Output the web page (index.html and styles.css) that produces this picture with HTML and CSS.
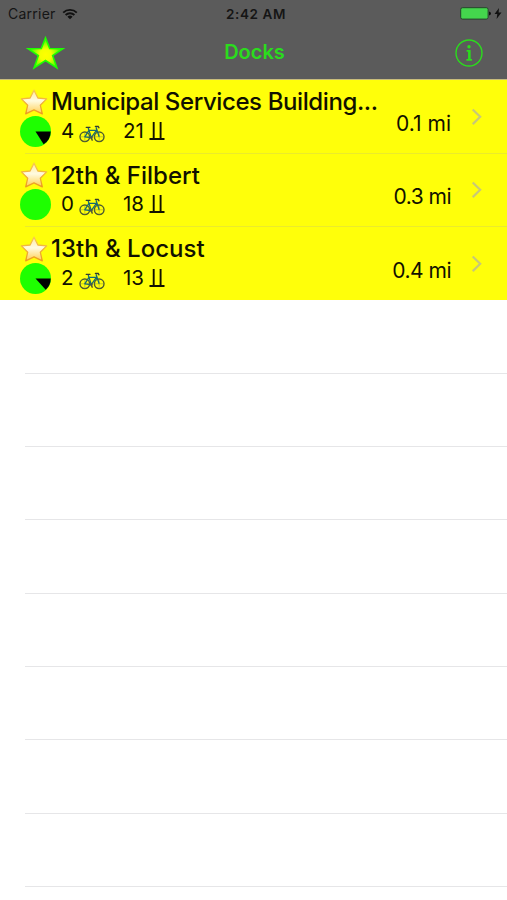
FILE: index.html
```html
<!DOCTYPE html>
<html lang="en">
<head>
    <meta charset="UTF-8">
    <meta name="viewport" content="width=device-width, initial-scale=1.0">
    <title>Docks</title>
    <link rel="stylesheet" href="styles.css">
</head>
<body>
    <!-- Shared icons -->
    <svg class="sprite" aria-hidden="true">
        <defs>
            <linearGradient id="starFill" x1="0" y1="0" x2="0" y2="1">
                <stop offset="0" stop-color="#ffe9a0"/>
                <stop offset="0.45" stop-color="#fffbe0"/>
                <stop offset="1" stop-color="#ffcf52"/>
            </linearGradient>
            <linearGradient id="starEdge" x1="0" y1="0" x2="0" y2="1">
                <stop offset="0" stop-color="#f7c850"/>
                <stop offset="1" stop-color="#ec9a20"/>
            </linearGradient>
            <radialGradient id="navStarFill" gradientUnits="userSpaceOnUse" cx="20" cy="20" r="15">
                <stop offset="0" stop-color="#ffff00"/>
                <stop offset="0.4" stop-color="#f4ff00"/>
                <stop offset="1" stop-color="#50ff00"/>
            </radialGradient>
        </defs>
        <symbol id="star" viewBox="0 0 28 26">
            <path d="M14 1.2L17.9 9L26.6 9.9L20.3 16.2L22.3 24.8L14 20.8L5.7 24.8L7.7 16.2L1.4 9.9L10.1 9Z" fill="url(#starFill)" stroke="url(#starEdge)" stroke-width="1.3" stroke-linejoin="round"/>
        </symbol>
        <symbol id="bike" viewBox="0 0 26 18">
            <g fill="none" stroke="#4c5a30" stroke-width="1.4">
                <circle cx="5.8" cy="11.8" r="4.8"/>
                <circle cx="20.2" cy="11.8" r="4.8"/>
            </g>
            <path d="M5.8 7V16.6M1 11.8H10.6M20.2 7V16.6M15.4 11.8H25" fill="none" stroke="#8e9432" stroke-width=".5"/>
            <path d="M9.2 3L12.3 12.6L17.4 5.4H9.9L5.8 11.8L12.3 12.6M20.2 11.8L17 2.2" fill="none" stroke="#176b70" stroke-width="1.3" stroke-linejoin="round"/>
            <path d="M7.2 2.3H11M16.4 1.4L19.2 1.5L20 2.8M12.3 12.6L13.2 15.2" fill="none" stroke="#343b32" stroke-width="1.3" stroke-linecap="round"/>
            <circle cx="12.3" cy="12.6" r="1.4" fill="#4b5845"/>
        </symbol>
        <symbol id="dock" viewBox="0 0 16 19">
            <path d="M4.7 0V17M11.6 0V17M.5 17H15.5" fill="none" stroke="#111100" stroke-width="1.9"/>
        </symbol>
        <symbol id="chevron" viewBox="0 0 12 18">
            <path d="M1.7 1.5L9.2 8.8L1.7 16.1" fill="none" stroke="#c8c878" stroke-width="2.2"/>
        </symbol>
    </svg>

    <header class="header">
        <div class="status-bar">
            <div class="carrier">
                <span>Carrier</span>
                <svg class="wifi" viewBox="0 0 16 12">
                    <path d="M1.2 4.6A9.8 9.8 0 0 1 14.8 4.6M3.6 7A6.3 6.3 0 0 1 12.4 7" fill="none" stroke="#111" stroke-width="1.9"/>
                    <path d="M8 11.3L5.4 8.8A3.7 3.7 0 0 1 10.6 8.8Z" fill="#111"/>
                </svg>
            </div>
            <span class="time">2:42 AM</span>
            <div class="power">
                <svg class="battery" viewBox="0 0 32 13">
                    <rect x=".7" y=".7" width="27.4" height="11.4" rx="1.8" fill="#44d64d" stroke="#24452a" stroke-width="1"/>
                    <path d="M29 4.4Q31 4.8 31 6.4Q31 8 29 8.4Z" fill="#111"/>
                </svg>
                <svg class="bolt" viewBox="0 0 8 11">
                    <path d="M5 0L.5 6H3.3L2.6 11L7.5 4.6H4.6Z" fill="#111"/>
                </svg>
            </div>
        </div>
        <nav class="nav-bar">
            <svg class="nav-star" viewBox="0 0 40 36">
                <path d="M20 2.5L24.3 13.3L38 13.6L27.3 20.7L31.7 33.2L20 25.7L8.3 33.2L12.7 20.7L2 13.6L15.7 13.3Z" fill="url(#navStarFill)" stroke="#1dff00" stroke-width="1.6"/>
            </svg>
            <h1>Docks</h1>
            <svg class="nav-info" viewBox="0 0 28 28">
                <circle cx="14" cy="14" r="13" fill="none" stroke="#2bdc1d" stroke-width="1.4"/>
                <circle cx="14" cy="7.8" r="1.7" fill="#2bdc1d"/>
                <path d="M11.6 11.9H14.5V20.8M11.4 20.9H17" fill="none" stroke="#2bdc1d" stroke-width="1.6"/>
                <path d="M14.3 11.1V21" stroke="#2bdc1d" stroke-width="2.4"/>
            </svg>
        </nav>
    </header>

    <main class="dock-list">
        <div class="row dock">
            <div class="info">
                <div class="name"><svg class="star"><use href="#star"/></svg><span class="long">Municipal Services Building...</span></div>
                <div class="stats">
                    <svg class="pie" viewBox="-15.5 -15.5 31 31">
                        <circle r="15.5" fill="#1eff00"/>
                        <path d="M0 0H15.2A15.2 15.2 0 0 1 8.1 12.8Z" fill="#000"/>
                    </svg>
                    <span class="bikes">4</span><svg class="bike"><use href="#bike"/></svg>
                    <span class="docks">21</span><svg class="dock-icon"><use href="#dock"/></svg>
                </div>
            </div>
            <span class="distance near">0.1 mi</span>
            <svg class="chevron"><use href="#chevron"/></svg>
        </div>
        <div class="row dock">
            <div class="info">
                <div class="name"><svg class="star"><use href="#star"/></svg><span>12th &amp; Filbert</span></div>
                <div class="stats">
                    <svg class="pie" viewBox="-15.5 -15.5 31 31">
                        <circle r="15.5" fill="#1eff00"/>
                    </svg>
                    <span class="bikes">0</span><svg class="bike"><use href="#bike"/></svg>
                    <span class="docks">18</span><svg class="dock-icon"><use href="#dock"/></svg>
                </div>
            </div>
            <span class="distance">0.3 mi</span>
            <svg class="chevron"><use href="#chevron"/></svg>
        </div>
        <div class="row dock">
            <div class="info">
                <div class="name"><svg class="star"><use href="#star"/></svg><span>13th &amp; Locust</span></div>
                <div class="stats">
                    <svg class="pie" viewBox="-15.5 -15.5 31 31">
                        <circle r="15.5" fill="#1eff00"/>
                        <path d="M0 0H15.2A15.2 15.2 0 0 1 10.2 11.3Z" fill="#000"/>
                    </svg>
                    <span class="bikes">2</span><svg class="bike"><use href="#bike"/></svg>
                    <span class="docks">13</span><svg class="dock-icon"><use href="#dock"/></svg>
                </div>
            </div>
            <span class="distance">0.4 mi</span>
            <svg class="chevron"><use href="#chevron"/></svg>
        </div>
        <div class="row"></div>
        <div class="row"></div>
        <div class="row"></div>
        <div class="row"></div>
        <div class="row"></div>
        <div class="row"></div>
        <div class="row"></div>
        <div class="row"></div>
    </main>
</body>
</html>
```
FILE: styles.css
```css
* {
    box-sizing: border-box;
}
body {
    margin: 0;
    height: 900px;
    overflow: hidden;
    background-color: #fff;
    color: #111100;
    font-family: Inter, "Liberation Sans", sans-serif;
}
svg {
    display: block;
    flex: none;
}
.sprite {
    position: absolute;
    width: 0;
    height: 0;
}

/* Header */
.header {
    height: 80.4px;
    background-color: #5b5b5b;
    border-bottom: 1px solid #c9bd7c;
}
.status-bar {
    display: grid;
    grid-template-columns: 1fr auto 1fr;
    align-items: center;
    height: 27px;
    padding: 0 5px 0 8px;
    font-size: 14px;
    color: #151515;
}
.carrier {
    display: flex;
    align-items: center;
    gap: 6px;
    letter-spacing: 0.25px;
}
.wifi {
    width: 16px;
    height: 12px;
}
.time {
    padding-left: 2px;
    font-size: 13.5px;
    font-weight: 600;
    letter-spacing: 0.6px;
}
.power {
    display: flex;
    justify-content: flex-end;
    align-items: center;
    gap: 2px;
}
.battery {
    width: 32px;
    height: 13px;
}
.bolt {
    width: 8px;
    height: 11px;
}
.nav-bar {
    display: grid;
    grid-template-columns: 1fr auto 1fr;
    align-items: center;
    height: 51px;
    padding: 0 24px 0 26px;
}
.nav-star {
    width: 39px;
    height: 36px;
}
.nav-bar h1 {
    margin: 0;
    font-size: 20px;
    font-weight: 600;
    line-height: 25px;
    color: #2bdc1d;
}
.nav-info {
    width: 28px;
    height: 28px;
    justify-self: end;
}

/* List */
.row {
    height: 73.33px;
    background: linear-gradient(#e6e6e8, #e6e6e8) 25px 100% / 100% 1px no-repeat;
}
.dock {
    display: flex;
    padding: 7.5px 24px 0 20px;
    background-color: #ffff0a;
    background-image: linear-gradient(#ebeb2c, #ebeb2c);
}
.dock:nth-child(3) {
    background-image: none;
}
.info {
    flex: 1;
}
.name {
    display: flex;
    align-items: center;
    gap: 3px;
    height: 28px;
    font-size: 24px;
    font-weight: 500;
    white-space: nowrap;
}
.long {
    letter-spacing: -0.4px;
}
.star {
    width: 28px;
    height: 26px;
}
.stats {
    display: flex;
    height: 31px;
    font-size: 20.5px;
    line-height: 29px;
}
.pie {
    width: 31px;
    height: 31px;
}
.bikes {
    width: 18px;
    margin-left: 10px;
}
.bike {
    width: 26px;
    height: 18px;
    margin-top: 9px;
}
.docks {
    width: 26px;
    margin-left: 18px;
}
.dock-icon {
    width: 16px;
    height: 19px;
    margin-top: 6px;
}
.distance {
    margin-top: 23px;
    font-size: 21px;
    line-height: 26px;
    letter-spacing: -0.5px;
}
.distance.near {
    letter-spacing: 0;
}
.chevron {
    width: 12px;
    height: 18px;
    margin: 20px 0 0 20px;
}
```
